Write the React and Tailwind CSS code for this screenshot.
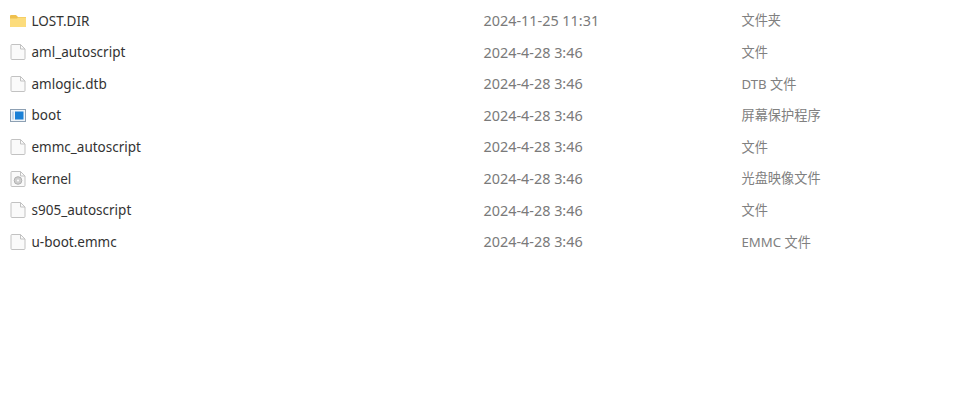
import React from 'react';

const files = [
  { name: 'LOST.DIR', date: '2024-11-25 11:31', type: '文件夹', icon: 'folder' },
  { name: 'aml_autoscript', date: '2024-4-28 3:46', type: '文件', icon: 'file' },
  { name: 'amlogic.dtb', date: '2024-4-28 3:46', type: 'DTB 文件', icon: 'file' },
  { name: 'boot', date: '2024-4-28 3:46', type: '屏幕保护程序', icon: 'screen' },
  { name: 'emmc_autoscript', date: '2024-4-28 3:46', type: '文件', icon: 'file' },
  { name: 'kernel', date: '2024-4-28 3:46', type: '光盘映像文件', icon: 'disc' },
  { name: 's905_autoscript', date: '2024-4-28 3:46', type: '文件', icon: 'file' },
  { name: 'u-boot.emmc', date: '2024-4-28 3:46', type: 'EMMC 文件', icon: 'file' },
];

const FileIcon = ({ children }) => (
  <svg width="16" height="18" viewBox="0 0 16 18">
    <path d="M2 1.5 H10.5 L15 6 V15.5 Q15 16.5 14 16.5 H2 Q1 16.5 1 15.5 V2.5 Q1 1.5 2 1.5 Z" fill="#fafafa" stroke="#c2c2c2" />
    <path d="M10.5 1.5 V6 H15" fill="none" stroke="#c2c2c2" />
    {children}
  </svg>
);

const Icon = ({ type }) => {
  if (type === 'folder') {
    return (
      <svg width="16" height="18" viewBox="0 0 16 18">
        <path d="M0 4 Q0 3 1 3 H6 L8 5 H16 V14 Q16 15 15 15 H1 Q0 15 0 14 Z" fill="#efc04e" />
        <path d="M0 6.5 H7 L8 5.5 H16 V14 Q16 15 15 15 H1 Q0 15 0 14 Z" fill="#fcdc7c" />
      </svg>
    );
  }
  if (type === 'screen') {
    return (
      <svg width="16" height="18" viewBox="0 0 16 18">
        <rect x="0.5" y="2.5" width="15" height="12" fill="#f1f5f8" stroke="#8da0b3" />
        <rect x="5" y="4.5" width="8.5" height="8" fill="#1a80d6" />
        <rect x="2" y="4.5" width="2" height="8" fill="#c4d9ec" />
      </svg>
    );
  }
  if (type === 'disc') {
    return (
      <FileIcon>
        <circle cx="8" cy="10.5" r="3.8" fill="#cfcfcf" stroke="#b0b0b0" />
        <circle cx="8" cy="10.5" r="1" fill="#ffffff" />
      </FileIcon>
    );
  }
  return <FileIcon />;
};

export default function App() {
  return (
    <div className="h-[400px] w-[975px] overflow-hidden bg-white pt-[5px] font-['Noto_Sans','Noto_Sans_CJK_SC',sans-serif]">
      {files.map((file) => (
        <div key={file.name} className="flex h-[31.6px] items-center">
          <div className="flex w-[483.5px] items-center pl-[10px]">
            <Icon type={file.icon} />
            <span className="ml-[5.5px] text-[13.5px] text-[#333333]">{file.name}</span>
          </div>
          <div className="w-[258px] text-[14.4px] text-[#7a7a7a]">{file.date}</div>
          <div className="mt-px text-[13.2px] text-[#808080]">{file.type}</div>
        </div>
      ))}
    </div>
  );
}
